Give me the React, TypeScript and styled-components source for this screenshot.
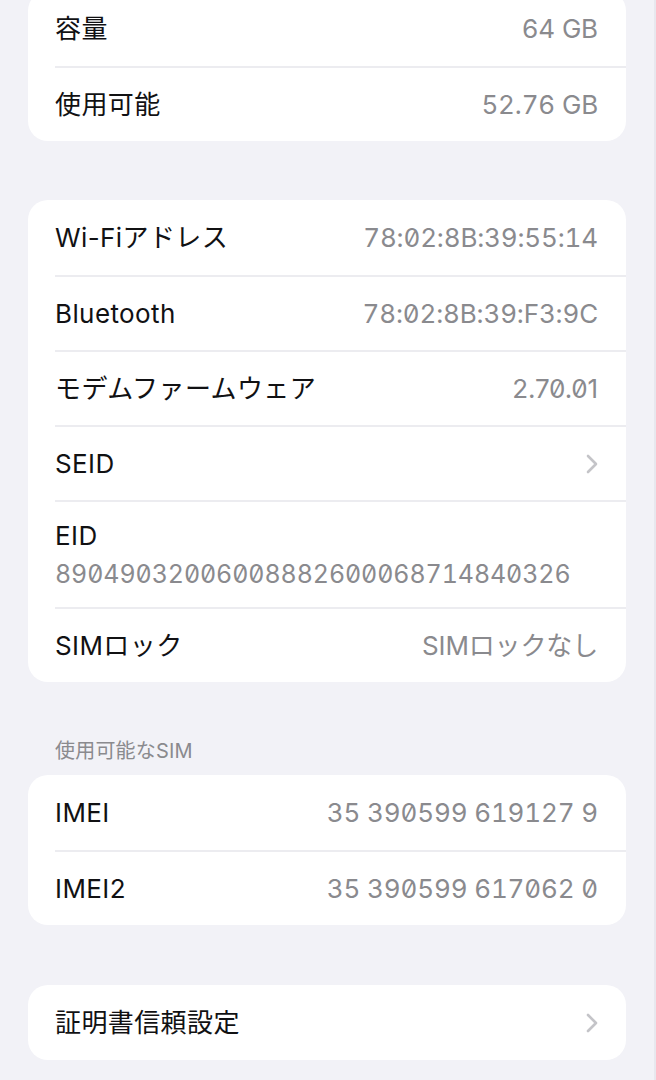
import React from "react";
import styled, { createGlobalStyle } from "styled-components";

const Global = createGlobalStyle`
  html, body { margin: 0; padding: 0; background: #f2f2f7; }
  body { font-family: Inter, "Noto Sans CJK JP", sans-serif; -webkit-font-smoothing: antialiased; }
`;

const Page = styled.div`
  min-height: 1080px;
  background: #f2f2f7;
  padding: 0 28px 0 28px;
  overflow: hidden;
  display: flex;
  flex-direction: column;
  box-sizing: border-box;
  border-right: 2px solid #e8e8ee;
`;

const Card = styled.section<{ $gap?: number }>`
  background: #ffffff;
  border-radius: 20px;
  margin-top: ${(p) => p.$gap ?? 0}px;
  overflow: hidden;
`;

const Row = styled.div<{ $tall?: boolean }>`
  margin-left: 27px;
  padding-right: 28px;
  height: ${(p) => (p.$tall ? 107 : 75)}px;
  box-sizing: border-box;
  display: flex;
  flex-direction: ${(p) => (p.$tall ? "column" : "row")};
  align-items: ${(p) => (p.$tall ? "flex-start" : "center")};
  justify-content: ${(p) => (p.$tall ? "center" : "space-between")};
  gap: ${(p) => (p.$tall ? 8 : 12)}px;
  & + & {
    border-top: 2px solid #ececf0;
  }
`;

const Label = styled.span`
  font-size: 26px;
  line-height: 30px;
  color: #111113;
  font-weight: 400;
  letter-spacing: 0.4px;
  white-space: nowrap;
`;

const Value = styled.span<{ $long?: boolean; $plain?: boolean }>`
  font-size: ${(p) => (p.$long ? 25 : 26)}px;
  line-height: 30px;
  color: #8a8a8e;
  font-weight: 400;
  letter-spacing: ${(p) => (p.$long ? -0.1 : -0.15)}px;
  white-space: nowrap;
  font-variant-numeric: ${(p) => (p.$plain ? "normal" : "tabular-nums slashed-zero")};
  font-feature-settings: ${(p) => (p.$plain ? '"zero" 1' : '"tnum" 1, "zero" 1')};
`;

const SectionHeader = styled.div`
  padding: 58px 0 13px 27px;
  font-size: 20px;
  line-height: 22px;
  color: #8a8a8e;
  letter-spacing: 0.2px;
`;

const Chevron = () => (
  <svg width="12" height="20" viewBox="0 0 12 20" fill="none">
    <path d="M2 2 L10 10 L2 18" stroke="#c4c4c8" strokeWidth="2.6" strokeLinecap="round" strokeLinejoin="round" />
  </svg>
);

type Item = { label: string; value?: string; chevron?: boolean; tall?: boolean; plain?: boolean };

const InfoRow = ({ label, value, chevron, tall, plain }: Item) => (
  <Row $tall={tall}>
    <Label>{label}</Label>
    {value && (
      <Value $long={tall} $plain={plain}>
        {value}
      </Value>
    )}
    {chevron && <Chevron />}
  </Row>
);

const storage: Item[] = [
  { label: "容量", value: "64 GB" },
  { label: "使用可能", value: "52.76 GB" },
];

const network: Item[] = [
  { label: "Wi-Fiアドレス", value: "78:02:8B:39:55:14" },
  { label: "Bluetooth", value: "78:02:8B:39:F3:9C" },
  { label: "モデムファームウェア", value: "2.70.01", plain: true },
  { label: "SEID", chevron: true },
  { label: "EID", value: "89049032006008882600068714840326", tall: true },
  { label: "SIMロック", value: "SIMロックなし" },
];

const sims: Item[] = [
  { label: "IMEI", value: "35 390599 619127 9" },
  { label: "IMEI2", value: "35 390599 617062 0" },
];

export default function App() {
  return (
    <>
      <Global />
      <Page>
        <Card $gap={-9}>
          {storage.map((i) => (
            <InfoRow key={i.label} {...i} />
          ))}
        </Card>
        <Card $gap={59}>
          {network.map((i) => (
            <InfoRow key={i.label} {...i} />
          ))}
        </Card>
        <SectionHeader>使用可能なSIM</SectionHeader>
        <Card>
          {sims.map((i) => (
            <InfoRow key={i.label} {...i} />
          ))}
        </Card>
        <Card $gap={60}>
          <InfoRow label="証明書信頼設定" chevron />
        </Card>
      </Page>
    </>
  );
}
